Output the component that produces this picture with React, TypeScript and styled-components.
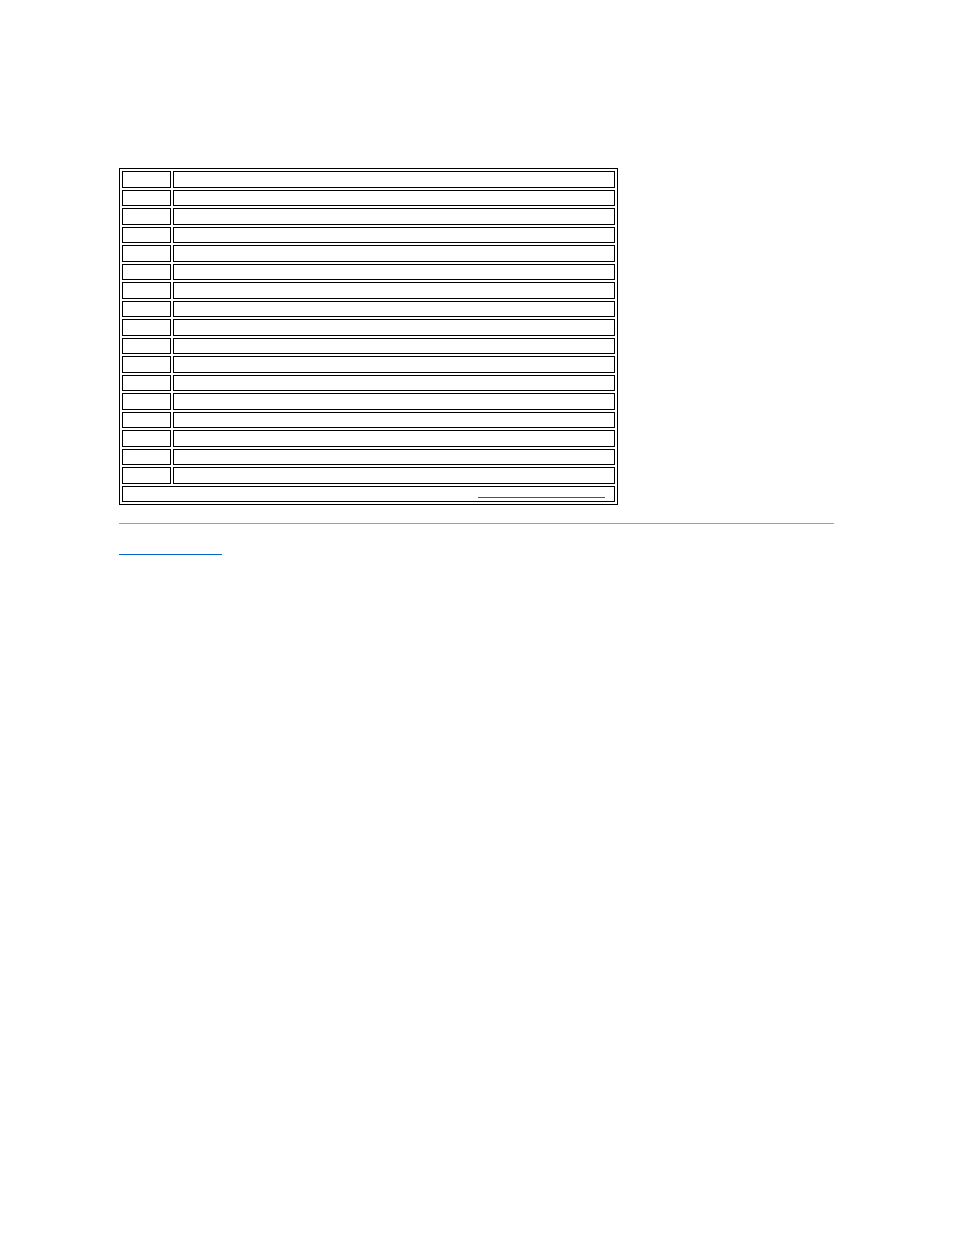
import React from 'react'
import styled, { createGlobalStyle } from 'styled-components'

const GlobalStyle = createGlobalStyle`
  html, body {
    margin: 0;
    padding: 0;
    background: #ffffff;
  }
  body {
    font-family: "Liberation Sans", Arial, sans-serif;
    font-size: 11px;
    color: #000000;
  }
`

const Page = styled.div`
  width: 954px;
  min-height: 1235px;
  box-sizing: border-box;
  padding: 168px 120px 0 119px;
`

const Table = styled.table`
  width: 499px;
  border: 1px solid #000000;
  border-collapse: separate;
  border-spacing: 2px;
  font-size: 11px;
  line-height: 12.5px;
`

const Cell = styled.td<{ $w?: number; $align?: string }>`
  border: 1px solid #000000;
  padding: 1px;
  width: ${(p) => (p.$w ? `${p.$w}px` : 'auto')};
  text-align: ${(p) => p.$align || 'left'};
  vertical-align: top;
  white-space: nowrap;
`

const FootCell = styled(Cell)`
  height: 12.5px;
  padding: 1.5px 9px 0.5px 1px;
  box-sizing: content-box;
`

const Link = styled.a<{ $w: number; $h?: number }>`
  display: inline-block;
  width: ${(p) => p.$w}px;
  height: ${(p) => p.$h ?? 11}px;
  border-bottom: 1px solid #0066cc;
  color: #0066cc;
  text-decoration: none;
  vertical-align: top;
`

const Rule = styled.hr`
  margin: 18px 0 0 0;
  border: none;
  border-top: 1px solid #a0a0a0;
  height: 0;
`

const BackRow = styled.div`
  margin-top: 19px;
  font-size: 11px;
  line-height: 13px;
`

const rows = Array.from({ length: 17 }, (_, i) => i)

export default function App() {
  return (
    <Page>
      <GlobalStyle />
      <Table>
        <tbody>
          {rows.map((i) => (
            <tr key={i}>
              <Cell $w={45}>&nbsp;</Cell>
              <Cell>&nbsp;</Cell>
            </tr>
          ))}
          <tr>
            <FootCell colSpan={2} $align="right">
              <Link href="#" $w={127} $h={9} />
            </FootCell>
          </tr>
        </tbody>
      </Table>
      <Rule />
      <BackRow>
        <Link href="#" $w={103} />
      </BackRow>
    </Page>
  )
}
